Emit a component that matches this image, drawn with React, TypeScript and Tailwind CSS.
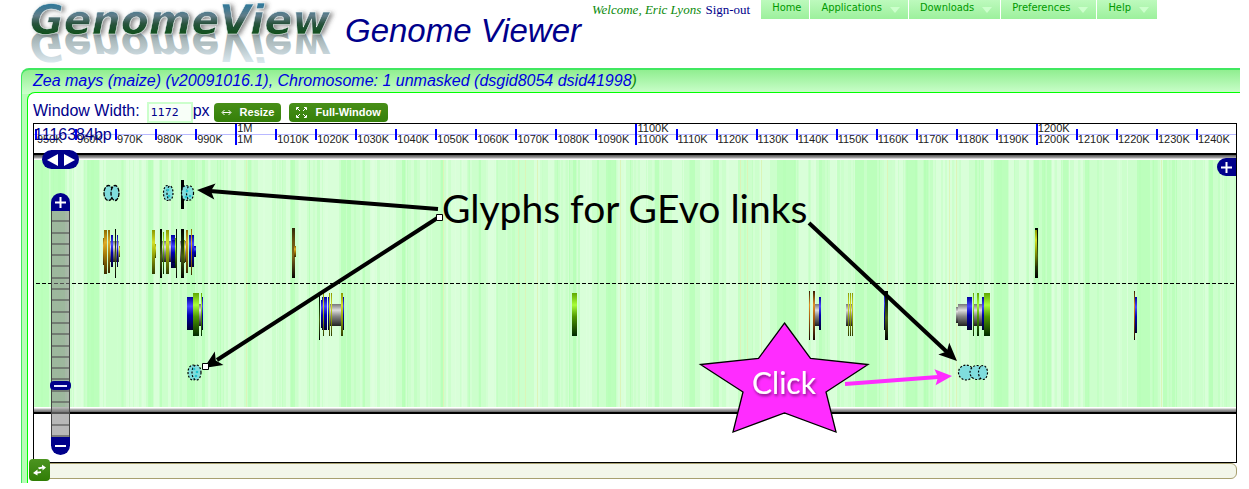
import React, { useState } from "react";

type Tone = "blue" | "green" | "gray" | "gold" | "lime" | "dark" | "orange" | "umber";

// [x, y, width, height, tone]
type Gene = [number, number, number, number, Tone];

const TONES: Record<Tone, [string, string, string, string]> = {
  blue: ["#0000a0", "#4848ff", "#0000b0", "#000030"],
  green: ["#5fa800", "#a8ff38", "#4f9800", "#002800"],
  gray: ["#777777", "#dddddd", "#888888", "#202020"],
  gold: ["#8a6a00", "#e0ac28", "#a87c08", "#3c2a00"],
  lime: ["#8a9800", "#d4e028", "#98a808", "#303c00"],
  dark: ["#000000", "#143008", "#486010", "#000000"],
  orange: ["#3a1800", "#e09028", "#a85a10", "#180800"],
  umber: ["#302808", "#6c5410", "#80681c", "#080400"],
};

const GENES: Gene[] = [
  [109, 241, 10, 21, "gray"], [103, 238, 2, 27, "gold"], [104, 230, 3, 44, "gold"], [108, 230, 2, 43, "gold"],
  [111, 235, 2, 32, "blue"], [115, 229, 1, 49, "dark"], [117, 235, 1, 32, "blue"], [119, 246, 1, 11, "lime"],
  [152, 230, 3, 44, "lime"], [155, 244, 1, 14, "lime"],
  [161, 241, 13, 21, "gray"], [160, 229, 2, 49, "dark"], [163, 232, 1, 42, "green"], [166, 230, 3, 44, "lime"],
  [171, 235, 4, 33, "blue"], [172, 240, 3, 23, "blue"], [176, 229, 1, 49, "dark"], [175, 238, 1, 30, "green"],
  [180, 241, 6, 21, "gray"], [181, 229, 3, 49, "dark"], [184, 240, 1, 23, "lime"], [186, 230, 2, 43, "gold"],
  [189, 235, 2, 32, "blue"], [191, 229, 1, 46, "gold"], [192, 235, 2, 32, "blue"], [194, 246, 2, 11, "blue"],
  [187, 297, 6, 33, "blue"], [193, 293, 6, 43, "green"], [199, 304, 2, 22, "gray"], [201, 293, 1, 43, "green"],
  [202, 297, 1, 33, "blue"],
  [292, 228, 3, 50, "umber"], [294, 246, 2, 11, "gold"],
  [319, 295, 1, 45, "dark"], [321, 300, 2, 28, "blue"], [322, 297, 5, 33, "blue"], [328, 297, 1, 33, "blue"],
  [330, 304, 12, 22, "gray"], [323, 293, 1, 43, "lime"], [329, 293, 1, 43, "lime"], [331, 293, 1, 43, "lime"],
  [341, 293, 2, 43, "lime"], [343, 297, 1, 33, "blue"],
  [572, 293, 5, 43, "green"],
  [809, 291, 1, 49, "orange"], [815, 304, 5, 22, "gray"], [813, 291, 2, 49, "orange"], [819, 297, 2, 33, "blue"],
  [846, 304, 6, 22, "gray"], [848, 293, 1, 43, "lime"], [850, 293, 1, 43, "lime"], [852, 293, 1, 43, "lime"],
  [884, 293, 1, 37, "blue"], [885, 291, 3, 49, "dark"],
  [956, 307, 2, 16, "gray"], [958, 304, 9, 22, "gray"], [967, 297, 5, 33, "blue"], [974, 304, 10, 22, "gray"],
  [973, 293, 1, 43, "green"], [977, 293, 2, 43, "green"], [982, 297, 2, 33, "blue"], [984, 293, 6, 43, "green"],
  [1035, 228, 3, 50, "dark"], [1035, 230, 2, 36, "lime"],
  [1134, 291, 1, 49, "orange"], [1135, 297, 2, 36, "blue"],
];

// [x, width] spans of the GC-content backdrop
const RICH: number[][] = [
  [34, 15], [51, 14], [87, 12], [148, 5], [160, 2], [187, 8], [202, 3], [217, 4], [248, 6], [291, 4], [309, 1],
  [341, 10], [362, 3], [402, 3], [441, 2], [478, 3], [508, 3], [557, 3], [569, 8], [597, 2], [606, 10],
  [630, 3], [655, 4], [690, 5], [716, 3], [777, 19], [819, 3], [855, 25], [905, 12], [924, 4], [975, 5],
  [994, 14], [1034, 17], [1063, 5], [1085, 4], [1137, 20], [1163, 14], [1209, 4],
];
const POOR: number[][] = [
  [48, 3], [67, 16], [100, 6], [126, 20], [154, 5], [168, 3], [208, 2], [228, 3], [236, 8], [258, 14], [286, 4],
  [299, 8], [320, 20], [370, 26], [420, 8], [443, 26], [488, 8], [534, 8], [548, 6], [580, 12], [618, 8], [640, 8],
  [672, 12], [700, 10], [726, 12], [760, 10], [798, 18], [830, 10], [894, 9], [936, 16], [961, 8],
  [984, 7], [1009, 5], [1019, 8], [1029, 4], [1052, 9], [1069, 14], [1127, 1], [1160, 3], [1205, 3],
];
const REPEATS = [246, 443, 518, 525, 537, 620, 740, 747, 761, 887, 949, 956, 1161];
const FINE = Array.from({ length: 230 }, (_, i) => ({
  x: 34 + ((i * 379 + ((i * i) % 97) * 13) % 1200),
  w: 1 + (i % 3),
  light: i % 2 === 0,
}));

const LABELS = Array.from({ length: 30 }, (_, i) => {
  const k = 950 + i * 10;
  return { text: k === 1000 ? "1M" : `${k}K`, major: k % 100 === 0 };
});

function Logo() {
  const lettering = "text-[41px] font-bold italic [font-family:'DejaVu_Sans',sans-serif]";
  return (
    <svg width="320" height="64" viewBox="0 0 320 64" className="shrink-0 overflow-visible" role="img" aria-label="GenomeView">
      <defs>
        <linearGradient id="logoFace" gradientUnits="userSpaceOnUse" x1="0" y1="3" x2="0" y2="35">
          <stop offset="0" stopColor="#2b789c" />
          <stop offset=".4" stopColor="#607c88" />
          <stop offset=".65" stopColor="#28523c" />
          <stop offset="1" stopColor="#0c5018" />
        </linearGradient>
        <linearGradient id="logoMirror" gradientUnits="userSpaceOnUse" x1="0" y1="3" x2="0" y2="35">
          <stop offset="0" stopColor="#dce9f0" />
          <stop offset="1" stopColor="#94a4a4" />
        </linearGradient>
        <filter id="logoShade" x="-5%" y="-10%" width="115%" height="130%">
          <feDropShadow dx="3" dy="1" stdDeviation="2" floodColor="#444" floodOpacity=".6" />
        </filter>
      </defs>
      <g transform="matrix(1 0 0 -1 0 66)" aria-hidden="true">
        <text x="9" y="34" fill="url(#logoMirror)" className={lettering}>GenomeView</text>
      </g>
      <text x="9" y="34" fill="url(#logoFace)" stroke="#e8f0f0" strokeWidth=".5" filter="url(#logoShade)" className={lettering}>
        GenomeView
      </text>
    </svg>
  );
}

function Nav() {
  const items = ["Home", "Applications", "Downloads", "Preferences", "Help"];
  return (
    <nav className="flex gap-px text-[11px] leading-[15px] text-[#009900] [font-family:'DejaVu_Sans_Condensed','DejaVu_Sans',sans-serif]">
      {items.map((item, i) => (
        <a
          key={item}
          href="#"
          className="flex h-[19px] gap-2 bg-linear-to-b from-[#bdfabd] to-[#9cf09c] pr-2 pl-[11px]"
        >
          {item}
          {i > 0 ? (
            <svg width="10" height="6" viewBox="0 0 10 6" className="mt-[7px] fill-[#ccffcc]">
              <path d="M0 0h10L5 6z" />
            </svg>
          ) : null}
        </a>
      ))}
    </nav>
  );
}

function Ruler() {
  return (
    <div className="relative h-[29px] shrink-0 text-[11px] text-[#222] [font-family:'Liberation_Sans',Arial,sans-serif]">
      <div className="grid h-full grid-cols-[repeat(30,minmax(0,1fr))] bg-[linear-gradient(#b8b8ff,#b8b8ff)] bg-[length:100%_1px] bg-[position:0_10px] bg-no-repeat pl-px">
        {LABELS.map((l) => (
          <div key={l.text} className="flex items-start">
            <span className={l.major ? "h-[21px] w-[2px] shrink-0 bg-[#0000ff]" : "mt-[5px] h-[11px] w-[2px] shrink-0 bg-[#0000ff]"} />
            <span className={l.major ? "-mt-px flex flex-col leading-[11px]" : "pt-[10px] leading-[11px]"}>
              {l.major ? <span>{l.text}</span> : null}
              <span>{l.text}</span>
            </span>
          </div>
        ))}
      </div>
      <span className="absolute top-0 left-0 text-base leading-[22px] text-[#00008b]">1116384bp</span>
    </div>
  );
}

function Tracks() {
  return (
    <svg viewBox="34 160 1202 247" className="block w-full bg-[#ccffcc]" role="img" aria-label="Gene models">
      <defs>
        {(Object.keys(TONES) as Tone[]).map((t) => (
          <linearGradient key={t} id={`tone-${t}`} x1="0" y1="0" x2="0" y2="1">
            <stop offset="0" stopColor={TONES[t][0]} />
            <stop offset=".28" stopColor={TONES[t][1]} />
            <stop offset=".55" stopColor={TONES[t][2]} />
            <stop offset="1" stopColor={TONES[t][3]} />
          </linearGradient>
        ))}
      </defs>
      <g shapeRendering="crispEdges">
        {POOR.map(([x, w]) => <rect key={x} x={x} y="160" width={w} height="247" fill="#d9ffd9" />)}
        {RICH.map(([x, w]) => <rect key={x} x={x} y="160" width={w} height="247" fill="#bcffbc" />)}
        {FINE.map((f, i) => (
          <rect key={i} x={f.x} y="160" width={f.w} height="247" fill={f.light ? "#e4ffe4" : "#b4ffb4"} opacity=".3" />
        ))}
        {REPEATS.map((x) => <rect key={x} x={x} y="160" width="1" height="247" fill="#dcf4b8" />)}
        <path d="M36 283.5H1236" stroke="#000" strokeDasharray="4 2" />
        {GENES.map(([x, y, w, h, t], i) => (
          <rect key={i} x={x} y={y} width={w} height={h} fill={`url(#tone-${t})`} />
        ))}
        <rect x="181" y="180" width="3" height="29" />
      </g>
      <g fill="#80dddd" stroke="#000" strokeWidth="1.3" strokeDasharray="4 1.2">
        <ellipse cx="108.500" cy="193" rx="4.5" ry="7.5" />
        <ellipse cx="115" cy="193" rx="4" ry="7.5" />
      </g>
      <g fill="#80dddd" stroke="#000" strokeWidth="1.2" strokeDasharray="2 1.6">
        <ellipse cx="167" cy="193" rx="3.5" ry="7.5" />
        <ellipse cx="170" cy="193" rx="3" ry="7" />
        <ellipse cx="186" cy="193" rx="4.5" ry="7.5" />
        <ellipse cx="190" cy="193" rx="3.5" ry="7" />
        <ellipse cx="193" cy="372.500" rx="5" ry="7.5" />
        <ellipse cx="196.500" cy="372.500" rx="4.5" ry="7.5" />
        <circle cx="966" cy="372.500" r="7.5" />
        <circle cx="977" cy="372.500" r="7" />
        <ellipse cx="983" cy="372.500" rx="4.500" ry="7" />
      </g>
      <g fill="#22c4d0">
        {[[168, 190], [169, 196], [187, 191], [190, 196], [186, 197], [197, 372], [196, 376], [194, 369]].map(
          ([x, y]) => <circle key={`${x}-${y}`} cx={x} cy={y} r="1.3" />,
        )}
      </g>
    </svg>
  );
}

function Annotations() {
  const head = "M0 0L-18-8L-14 0L-18 8Z";
  return (
    <svg viewBox="34 124 1202 338" className="pointer-events-none absolute top-0 left-0 w-full [font-family:Lato,sans-serif]">
      <defs>
        <filter id="clickShade" x="-10%" y="-10%" width="130%" height="140%">
          <feDropShadow dx="1" dy="2" stdDeviation="1.5" floodColor="#000" floodOpacity=".5" />
        </filter>
      </defs>
      <g stroke="#000" strokeWidth="4">
        <path d="M438 209L210 191" />
        <path d="M439 217L217 360" />
        <path d="M809 223L947 352" />
      </g>
      <path d={head} transform="translate(197 190) rotate(184.500)" />
      <path d={head} transform="translate(204 368) rotate(147.200)" />
      <path d={head} transform="translate(957 361) rotate(43)" />
      <g fill="#fff" stroke="#000">
        <path d="M436.500 214.500h6v6h-6z" />
        <path d="M202.500 363.500h6v6h-6z" />
      </g>
      <text x="442" y="223" className="text-[39px]">Glyphs for GEvo links</text>
      <path
        d="M784.500 323L810.500 358.500L868 364.500L826 392L836 432L784.500 413L733 432L743 392L700.500 364.500L758.500 358.500Z"
        fill="#ff2cff"
        stroke="#000"
        strokeWidth="1.3"
      />
      <path d="M845 384L938 377" stroke="#ff2cff" strokeWidth="4" />
      <path d="M0 0L-17-8L-14 0L-17 8Z" fill="#ff2cff" transform="translate(952 376) rotate(-4)" />
      <text x="784" y="394" textAnchor="middle" fill="#fff" filter="url(#clickShade)" className="text-[30px]">Click</text>
    </svg>
  );
}

function ZoomSlider() {
  const [level, setLevel] = useState(3);
  return (
    <div className="absolute top-[69px] left-[17px] flex w-[19px] flex-col">
      <button aria-label="Zoom in" onClick={() => setLevel(Math.min(20, level + 1))} className="flex h-[18px] items-center justify-center rounded-t-full bg-[#00008b]">
        <svg width="11" height="11" viewBox="0 0 11 11" stroke="#fff" strokeWidth="2"><path d="M5.500 0v11M0 5.500h11" /></svg>
      </button>
      <div className="relative flex h-[226px] flex-col border-x border-[#444] bg-[#888]/60">
        {Array.from({ length: 20 }, (_, i) => (
          <span key={i} className="flex-1 border-b-2 border-[#555]/60" />
        ))}
        <input
          type="range"
          min="0"
          max="20"
          value={level}
          aria-label="Zoom level"
          onChange={(e) => setLevel(Number(e.target.value))}
          className="absolute inset-0 h-full w-full opacity-0 [direction:rtl] [writing-mode:vertical-lr]"
        />
        <span className="pointer-events-none absolute top-[170px] -left-[2px] flex h-[9px] w-[21px] items-center justify-center rounded-sm bg-[#00008b]">
          <span className="h-[2px] w-[13px] bg-[#e8e8ff]" />
        </span>
      </div>
      <button aria-label="Zoom out" onClick={() => setLevel(Math.max(0, level - 1))} className="flex h-[18px] items-center justify-center rounded-b-full bg-[#00008b]">
        <span className="h-[2px] w-[11px] bg-white" />
      </button>
    </div>
  );
}

function GreenButton({ label, children }: { label: string; children: React.ReactNode }) {
  return (
    <button className="flex h-[19px] items-center gap-2 rounded bg-linear-to-b from-[#488f18] to-[#347f08] px-[7px] text-[11px] font-bold text-white">
      {children}
      {label}
    </button>
  );
}

export default function App() {
  const [width, setWidth] = useState("1172");
  return (
    <div className="bg-white pr-[9px] pl-[21px] text-base text-[#00008b] [font-family:'Liberation_Sans',Arial,sans-serif]">
      <header className="flex h-[68px] items-start pr-[83px]">
        <Logo />
        <h1 className="mt-3 ml-1 text-[33px] leading-[38px] whitespace-nowrap italic">Genome Viewer</h1>
        <div className="ml-auto flex items-start gap-[11px]">
          <p className="text-[13px] leading-5 whitespace-nowrap text-[#0a8a0a] [font-family:'Liberation_Serif','Times_New_Roman',serif]">
            <i>Welcome, Eric Lyons</i>{" "}
            <a href="#" className="ml-px text-[#00008b]">Sign-out</a>
          </p>
          <Nav />
        </div>
      </header>

      <main className="rounded-tl-lg border-t-2 border-l border-[#40e860] bg-[#b8fcb8] bg-[linear-gradient(#90ee90,#ccffcc)] bg-[length:100%_24px] bg-no-repeat pl-[5px]">
        <h2 className="pl-[6px] leading-[22px] whitespace-nowrap text-[#0000e0] italic">
          Zea mays (maize) (v20091016.1), Chromosome: 1 unmasked (dsgid8054 dsid41998<span className="text-[#0a8a0a]">)</span>
        </h2>

        <section className="rounded-tl-lg border-t border-l border-[#00ff00] bg-white pr-[3px] pb-1 pl-[5px]">
          <div className="flex h-[30px] items-end">
            <label htmlFor="window-width" className="leading-6">Window Width:</label>
            <input
              id="window-width"
              value={width}
              onChange={(e) => setWidth(e.target.value)}
              className="ml-[7px] h-[21px] w-[46px] border-2 border-[#ccffcc] bg-[#f8fff8] px-[2px] text-[11px] [font-family:'DejaVu_Sans',sans-serif]"
            />
            <span className="leading-6">px</span>
            <div className="ml-1 flex gap-2 pb-px">
              <GreenButton label="Resize">
                <svg width="11" height="9" viewBox="0 0 11 9" fill="none" stroke="#fff">
                  <path d="M1.500 4.500h8M3.500 2L1 4.500L3.500 7M7.500 2L10 4.500L7.500 7" />
                </svg>
              </GreenButton>
              <GreenButton label="Full-Window">
                <svg width="11" height="11" viewBox="0 0 11 11" fill="none" stroke="#fff">
                  <path d="M.500 3V.5H3M8 .5h2.500V3M10.500 8v2.500H8M3 10.500H.5V8M1 1l3 3M10 1L7 4M1 10l3-3M10 10L7 7" />
                </svg>
              </GreenButton>
            </div>
          </div>

          <div className="relative border border-black">
            <Ruler />
            <div className="h-[7px] border-t-2 border-black bg-[linear-gradient(#555_0,#aaa_3px,#fff_4px)]" />
            <Tracks />
            <div className="h-[7px] border-b-2 border-black bg-[linear-gradient(#fff_1px,#bbb_2px,#666_5px)]" />
            <div className="h-12" />
            <div className="absolute top-[26px] left-2 flex h-[19px] w-[37px] items-center justify-center gap-[6px] rounded-full bg-[#00008b]">
              <button aria-label="Pan left">
                <svg width="11" height="12" viewBox="0 0 11 12" fill="#fff" className="block"><path d="M11 0v12L0 6z" /></svg>
              </button>
              <button aria-label="Pan right">
                <svg width="11" height="12" viewBox="0 0 11 12" fill="#fff" className="block"><path d="M0 0v12L11 6z" /></svg>
              </button>
            </div>
            <button aria-label="Show track list" className="absolute top-[34px] right-0 flex h-[18px] w-[19px] items-center justify-center rounded-l-full bg-[#00008b]">
              <svg width="11" height="11" viewBox="0 0 11 11" stroke="#fff" strokeWidth="2"><path d="M5.500 0v11M0 5.500h11" /></svg>
            </button>
            <ZoomSlider />
            <Annotations />
            <button aria-label="Swap panels" className="absolute -bottom-[19px] -left-[5px] z-10 flex h-[22px] w-[21px] items-center justify-center rounded bg-linear-to-b from-[#4c9420] to-[#2f7d04]">
              <svg width="13" height="12" viewBox="0 0 13 12" fill="#fff">
                <path d="M5 3.500L9 2.800V.8L13 3.500L9.500 6.500V4.600L6 5.200ZM8 7.200L4.500 7.800V5.600L0 9L4.500 11.600V9.600L8 9Z" />
              </svg>
            </button>
          </div>
          <div className="h-4 rounded-r-md border border-[#a8a070] bg-[#f3f6ea]" />
        </section>
      </main>
    </div>
  );
}
